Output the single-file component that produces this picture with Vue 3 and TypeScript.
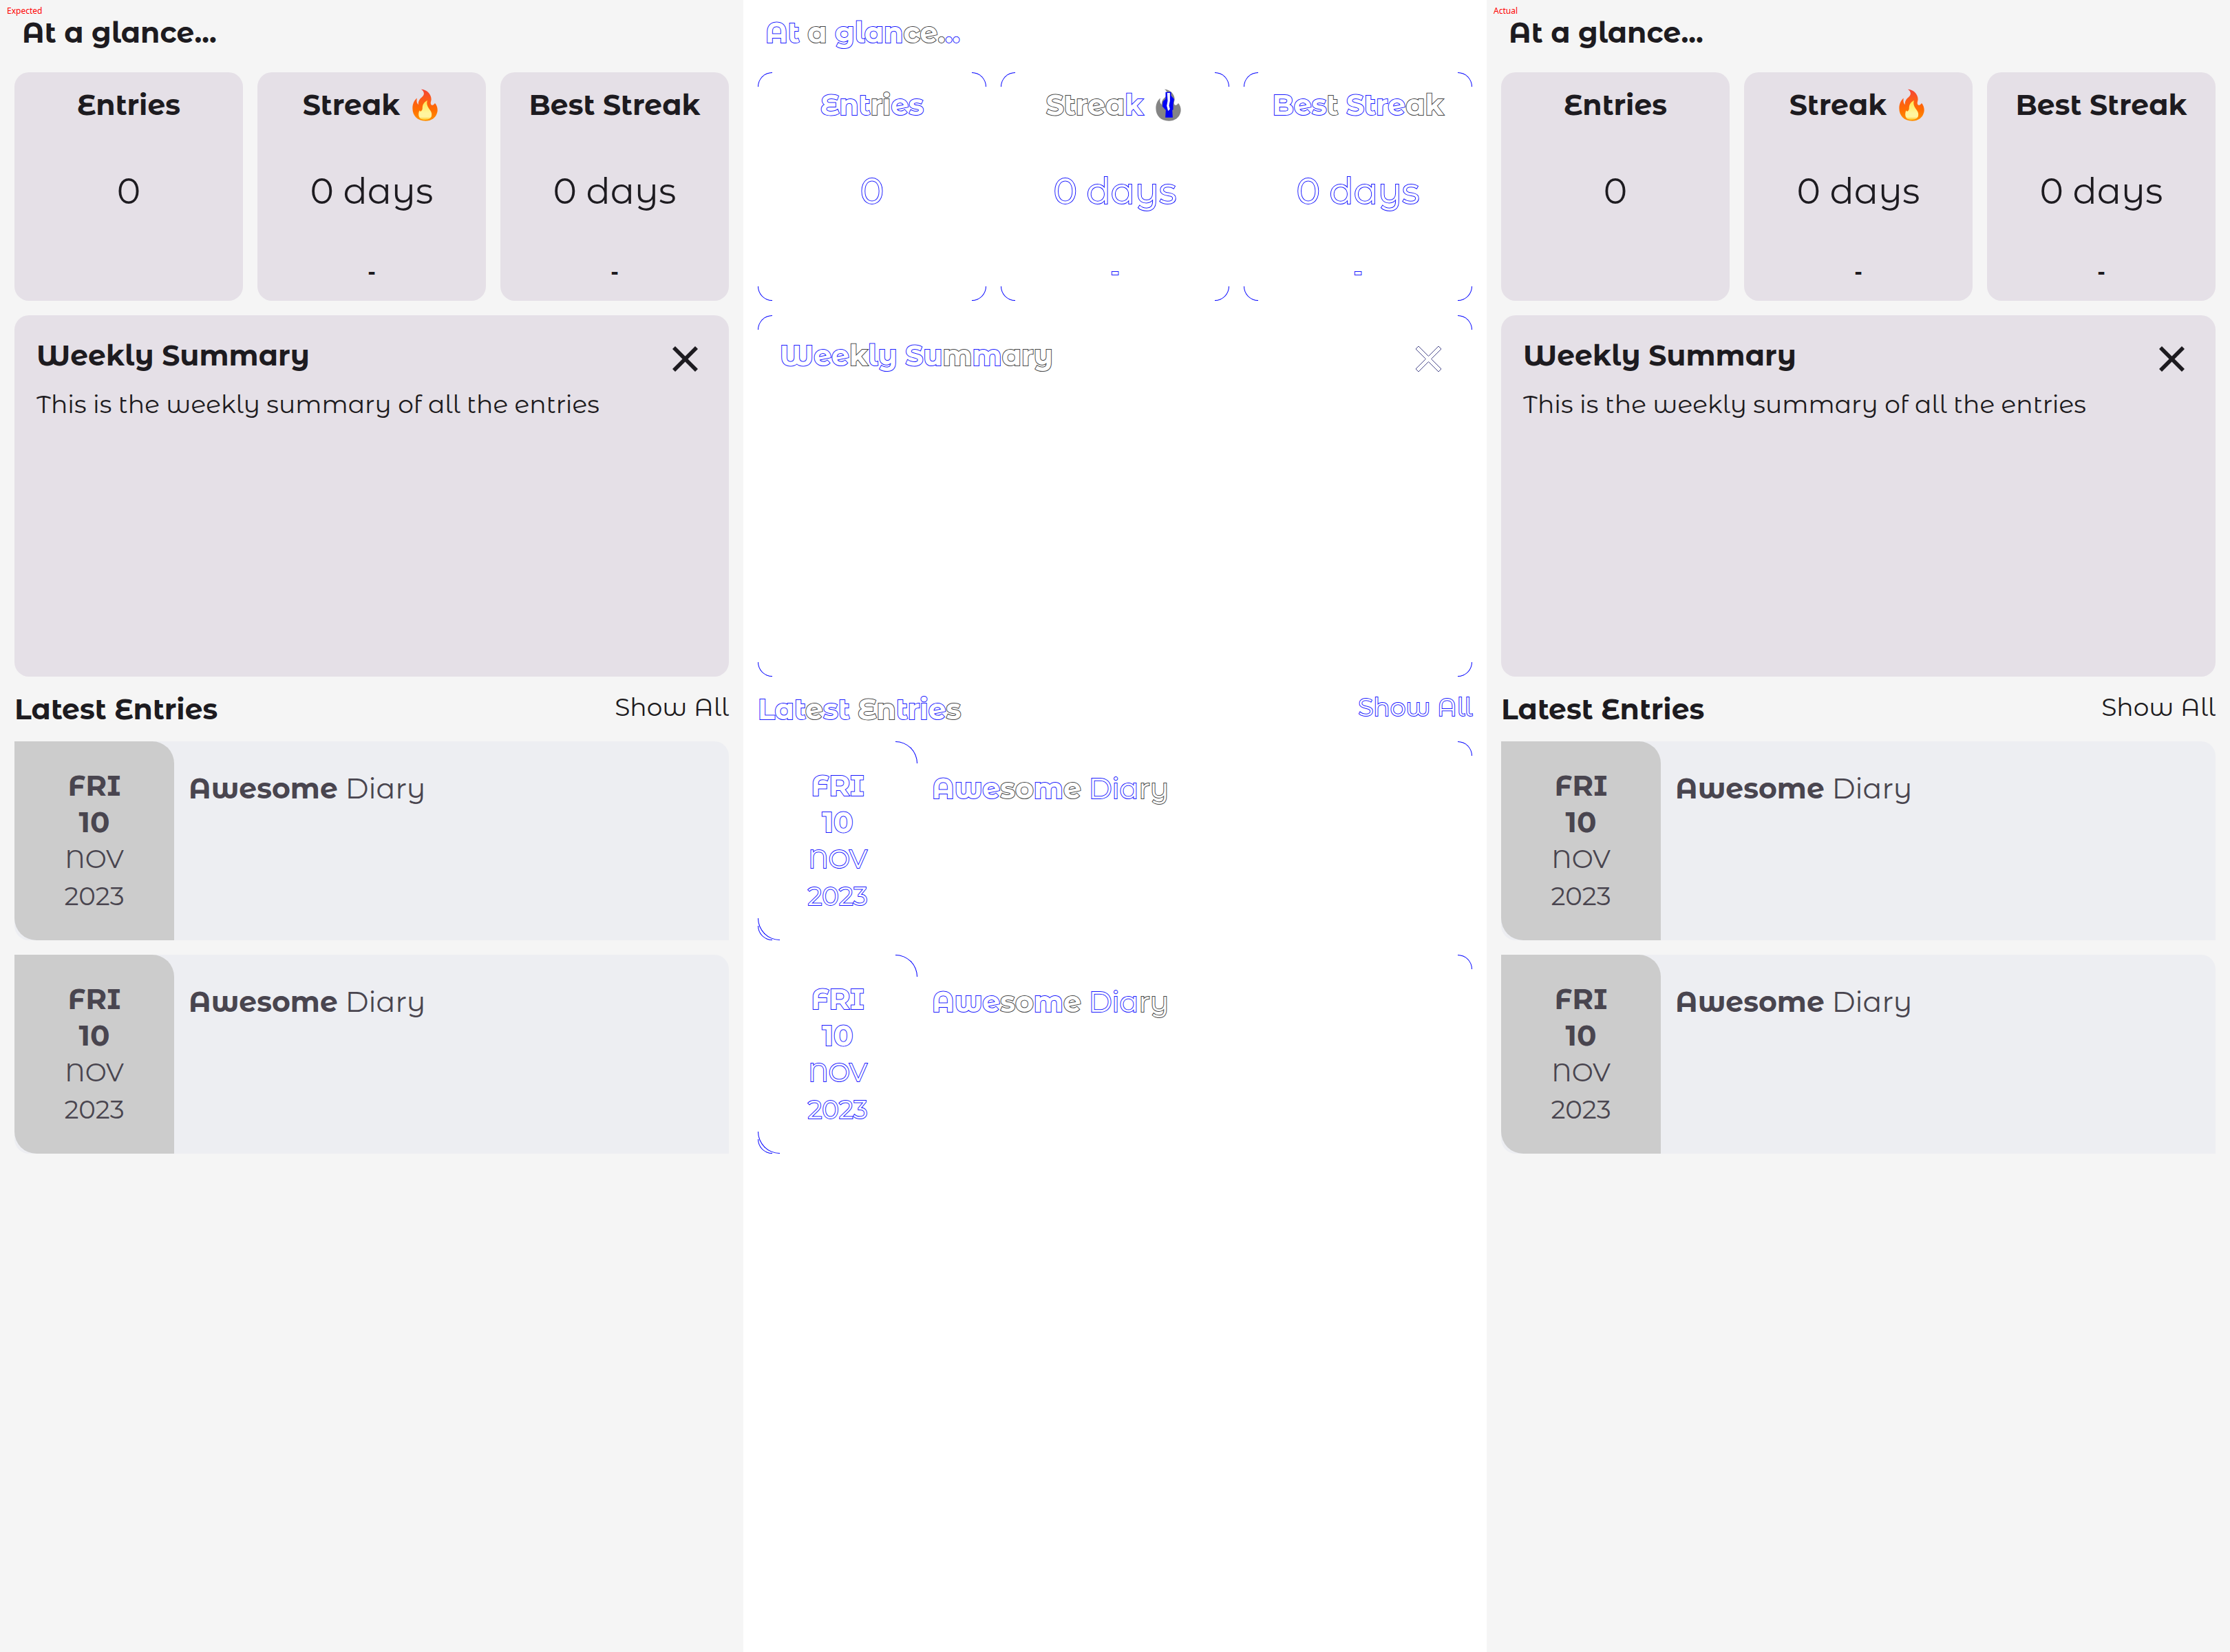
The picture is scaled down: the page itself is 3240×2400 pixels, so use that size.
<script setup lang="ts">
interface Panel {
  id: string
  label: string
  diff: boolean
}

interface Segment {
  text: string
  dark: boolean
}

const panels: Panel[] = [
  { id: 'expected', label: 'Expected', diff: false },
  { id: 'difference', label: '', diff: true },
  { id: 'actual', label: 'Actual', diff: false },
]

const stats = [
  { title: 'Ent|ri|es', flame: false, value: '0', note: '' },
  { title: '|Strea|k', flame: true, value: '0 days', note: '-' },
  { title: 'Bes|t| Stre|ak', flame: false, value: '0 days', note: '-' },
]

const entries = [
  { id: 1, day: 'FRI', date: '10', month: 'NOV', year: '2023' },
  { id: 2, day: 'FRI', date: '10', month: 'NOV', year: '2023' },
]

// Runs between bars alternate: blue outline first, dark outline second.
function segments(marked: string): Segment[] {
  return marked
    .split('|')
    .map((text, i) => ({ text, dark: i % 2 === 1 }))
    .filter((s) => s.text !== '')
}
</script>

<template>
  <main class="board">
    <section v-for="panel in panels" :key="panel.id" class="panel" :class="{ diff: panel.diff }">
      <span v-if="panel.label" class="label">{{ panel.label }}</span>

      <h1 class="title glance"><span v-for="(s, i) in segments('At |a| glan|ce.|..')" :key="i" :class="{ dark: s.dark }">{{ s.text }}</span></h1>

      <div class="stats">
        <article v-for="stat in stats" :key="stat.title" class="card stat">
          <i class="arc tl"></i><i class="arc tr"></i><i class="arc bl"></i><i class="arc br"></i>
          <h2 class="title">
            <span><span v-for="(s, i) in segments(stat.title)" :key="i" :class="{ dark: s.dark }">{{ s.text }}</span></span>
            <svg v-if="stat.flame" class="flame" viewBox="0 0 110 140" role="img" aria-label="fire">
              <defs>
                <linearGradient :id="'outer-' + panel.id" x1="0" y1="0" x2="0" y2="1">
                  <stop offset="0" stop-color="#f44336" />
                  <stop offset="0.3" stop-color="#fb5a1c" />
                  <stop offset="0.65" stop-color="#ff6d00" />
                  <stop offset="1" stop-color="#ff9100" />
                </linearGradient>
                <linearGradient :id="'inner-' + panel.id" x1="0" y1="0" x2="0" y2="1">
                  <stop offset="0" stop-color="#ffe54c" />
                  <stop offset="0.65" stop-color="#fff59d" />
                  <stop offset="0.85" stop-color="#fff3a0" />
                  <stop offset="1" stop-color="#ffc21a" />
                </linearGradient>
              </defs>
              <path
                :fill="panel.diff ? '#848484' : `url(#outer-${panel.id})`"
                d="M38 2C62 2 84 24 82 48C81 56 77 63 82 69C89 73 94 69 98 62C108 74 111 88 108 101C103 125 82 139 57 139C22 139 1 116 1 84C1 64 9 49 20 40C18 54 19 62 26 69C25 53 33 43 42 36C54 26 53 11 38 2Z"
              />
              <path
                v-if="!panel.diff"
                :fill="`url(#inner-${panel.id})`"
                d="M65 50C50 59 45 69 44 80C44 87 44 93 38 97C33 98 31 95 31 93C24 110 27 126 40 132C55 138 78 133 83 119C87 103 78 94 71 84C64 74 61 63 65 50Z"
              />
              <path
                v-if="panel.diff"
                fill="#0000f5"
                d="M43 14L67 14L67 30L80 45L76 66L76 90L72 92L74 124L42 124L44 92L29 76L32 54L43 44Z"
              />
              <path v-if="panel.diff" fill="#ffffff" d="M50 18H62V52L58 72L62 88L54 96L48 74L52 52Z" />
            </svg>
          </h2>
          <p class="value">{{ stat.value }}</p>
          <p class="note">{{ stat.note }}</p>
        </article>
      </div>

      <article class="card summary">
        <i class="arc tl"></i><i class="arc tr"></i><i class="arc bl"></i><i class="arc br"></i>
        <header class="summary-head">
          <h2 class="title"><span v-for="(s, i) in segments('Wee|k|ly Su|m|m|ary')" :key="i" :class="{ dark: s.dark }">{{ s.text }}</span></h2>
          <button class="close" type="button" aria-label="Close">
            <svg viewBox="0 0 37 37">
              <path
                d="M0 4L4 0L18.500 14.500L33 0L37 4L22.500 18.500L37 33L33 37L18.500 22.500L4 37L0 33L14.500 18.500Z"
              />
            </svg>
          </button>
        </header>
        <p v-if="!panel.diff" class="text">This is the weekly summary of all the entries</p>
      </article>

      <div class="latest">
        <h2 class="title"><span v-for="(s, i) in segments('Lat|e|st |En|trie|s')" :key="i" :class="{ dark: s.dark }">{{ s.text }}</span></h2>
        <a class="text show-all" href="#">Show All</a>
      </div>

      <div class="entries">
        <article v-for="entry in entries" :key="entry.id" class="entry">
          <i class="arc tr"></i><i class="arc bl"></i>
          <div class="date">
            <i class="arc wide tr"></i><i class="arc wide bl"></i>
            <span class="day">{{ entry.day }}</span>
            <span class="day">{{ entry.date }}</span>
            <span class="month">{{ entry.month }}</span>
            <span class="month">{{ entry.year }}</span>
          </div>
          <h3 class="name"><b><span v-for="(s, i) in segments('Awe|so|m|e')" :key="i" :class="{ dark: s.dark }">{{ s.text }}</span></b> <span>Dia</span><span class="dark">ry</span></h3>
        </article>
      </div>
    </section>
  </main>
</template>

<style>
body {
  margin: 0;
  background: #f5f5f5;
}
</style>

<style scoped>
.board {
  display: grid;
  grid-template-columns: repeat(3, minmax(0, 1fr));
  min-height: 100vh;
  font-family: 'Montserrat Alternates', Montserrat, Inter, sans-serif;
  color: #1d1b20;
}

.panel {
  position: relative;
  box-sizing: border-box;
  padding: 21px;
  background: #f5f5f5;
}

.label {
  position: absolute;
  top: 8px;
  left: 10px;
  font: 12px/16px 'Noto Sans', sans-serif;
  color: #ff0000;
}

h1,
h2,
h3,
p {
  margin: 0;
}

.title {
  font-size: 41px;
  line-height: 53px;
  font-weight: 700;
}

.text {
  font-size: 36px;
  line-height: 53px;
  font-weight: 400;
}

.glance {
  padding: 0 11px 31px;
}

.card {
  position: relative;
  border-radius: 21px;
  background: #e5e0e7;
}

.stats {
  display: grid;
  grid-template-columns: repeat(3, minmax(0, 1fr));
  gap: 21px;
}

.stat {
  box-sizing: border-box;
  aspect-ratio: 1;
  padding: 21px 0;
  display: flex;
  flex-direction: column;
  align-items: center;
  justify-content: space-between;
}

.stat .title {
  display: flex;
  align-items: center;
  gap: 14px;
  white-space: nowrap;
}

.flame {
  width: 37px;
  height: 47px;
  margin: 0 4px;
}

.value {
  font-size: 52px;
  line-height: 64px;
  font-weight: 400;
}

.note {
  min-height: 40px;
  font-size: 30px;
  line-height: 40px;
  font-weight: 700;
}

.summary {
  box-sizing: border-box;
  min-height: 525px;
  margin-top: 21px;
  padding: 32px;
}

.summary-head {
  display: flex;
  justify-content: space-between;
  align-items: flex-start;
}

.close {
  padding: 13px;
  border: 0;
  background: none;
  color: inherit;
}

.close svg {
  display: block;
  width: 37px;
  height: 37px;
  fill: currentColor;
}

.summary .text {
  margin-top: 8px;
}

.latest {
  display: flex;
  justify-content: space-between;
  align-items: flex-start;
  padding: 21px 0 20px;
}

.show-all {
  line-height: 46px;
  color: inherit;
  text-decoration: none;
}

.entries {
  display: flex;
  flex-direction: column;
  gap: 21px;
}

.entry {
  position: relative;
  display: flex;
  min-height: 289px;
  border-radius: 0 21px 0 21px;
  background: #edeef2;
  color: #49454f;
}

.date {
  position: relative;
  box-sizing: border-box;
  width: 232px;
  padding: 38px 0 32px;
  display: flex;
  flex-direction: column;
  align-items: center;
  border-radius: 0 32px 0 32px;
  background: #cccccc;
}

.day {
  font-size: 42px;
  line-height: 53px;
  font-weight: 700;
}

.month {
  font-size: 37px;
  line-height: 54px;
  font-weight: 400;
}

.name {
  padding: 42px 21px;
  font-size: 41px;
  line-height: 53px;
  font-weight: 400;
}

.name b {
  font-weight: 700;
}

/* Difference panel: only the edges of shapes and letters are drawn. */
.arc {
  display: none;
}

.diff,
.diff .card,
.diff .entry,
.diff .date {
  background: #ffffff;
}

.diff .title,
.diff .value,
.diff .note,
.diff .name,
.diff .day,
.diff .month,
.diff .show-all {
  color: #ffffff;
  -webkit-text-stroke: 2px #1a1aff;
  paint-order: stroke fill;
}

.diff .dark {
  -webkit-text-stroke-color: #444444;
}

.diff .close svg {
  overflow: visible;
  fill: #ffffff;
  stroke: #4c4c8c;
  stroke-width: 1;
}

.diff .arc {
  display: block;
  position: absolute;
  box-sizing: border-box;
  width: 21px;
  height: 21px;
  border: 0 solid #0000ff;
}

.diff .arc.wide {
  width: 32px;
  height: 32px;
}

.diff .arc.tl {
  top: 0;
  left: 0;
  border-width: 1px 0 0 1px;
  border-top-left-radius: 100%;
}

.diff .arc.tr {
  top: 0;
  right: 0;
  border-width: 1px 1px 0 0;
  border-top-right-radius: 100%;
}

.diff .arc.bl {
  bottom: 0;
  left: 0;
  border-width: 0 0 1px 1px;
  border-bottom-left-radius: 100%;
}

.diff .arc.br {
  bottom: 0;
  right: 0;
  border-width: 0 1px 1px 0;
  border-bottom-right-radius: 100%;
}
</style>
